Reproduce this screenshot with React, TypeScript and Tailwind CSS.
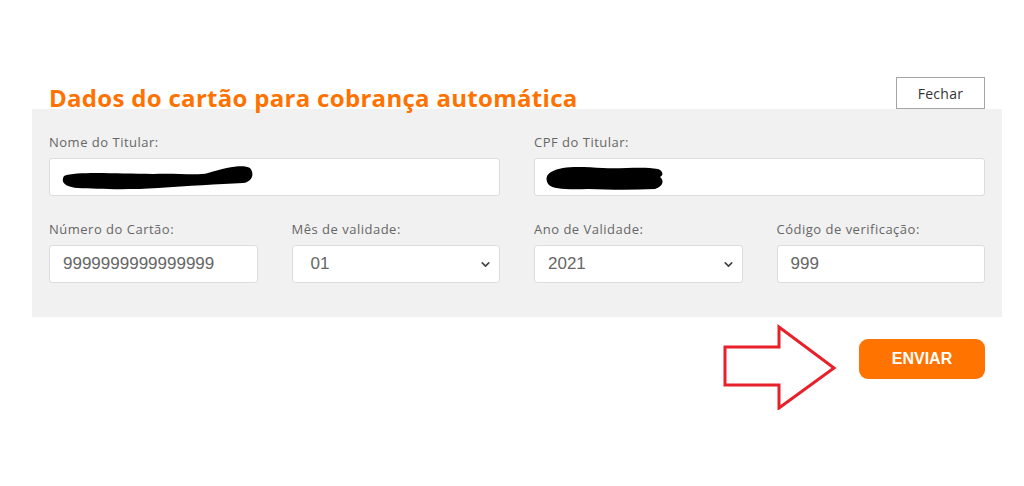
import { ChevronDown } from "lucide-react";

const Field = ({ label, children }: { label: string; children: React.ReactNode }) => (
  <div className="flex flex-col">
    <label className="text-[13px] leading-4 tracking-[0.5px] text-[#666] mb-[8px]">{label}</label>
    {children}
  </div>
);

const inputBox =
  "h-[38px] w-full bg-white border border-[#dcdcdc] rounded-[3px] flex items-center px-[13px] text-[17px] text-[#666]";

const Scribble = ({ w, d }: { w: number; d: string }) => (
  <svg width={w} height="30" viewBox={`0 0 ${w} 30`} className="-ml-[5px]">
    <path d={d} fill="#000" />
  </svg>
);

const arial = { fontFamily: '"Liberation Sans", Arial, sans-serif' };

export default function App() {
  return (
    <div className="w-[1024px] h-[486px] bg-white pt-[77px]" style={{ fontFamily: '"Open Sans", sans-serif' }}>
      <div className="ml-[32px] w-[970px]">
        {/* header */}
        <div className="flex justify-between items-end px-[17px]">
          <h1 className="text-[24px] leading-[24px] tracking-[0.3px] font-bold text-[#ff7200] -mb-[1px]">
            Dados do cartão para cobrança automática
          </h1>
          <button className="w-[89px] h-[32px] border border-[#a5a5a5] bg-white text-[14px] tracking-[0.3px] text-[#333]">
            Fechar
          </button>
        </div>

        {/* panel */}
        <div className="bg-[#f1f1f1] px-[17px] pt-[25px] pb-[34px]">
          <div className="grid grid-cols-2 gap-x-[34px]">
            <Field label="Nome do Titular:">
              <div className={inputBox}>
                <Scribble
                  w={196}
                  d="M6 14 C20 9 60 12 95 12 C120 11 140 14 150 11 C170 5 185 2 192 6 C197 12 194 20 185 21 C160 22 130 24 100 26 C70 28 40 27 20 26 C8 25 2 21 6 14 Z"
                />
              </div>
            </Field>
            <Field label="CPF do Titular:">
              <div className={inputBox}>
                <Scribble
                  w={124}
                  d="M8 10 C20 3 40 5 60 6 C80 7 100 4 115 7 C120 9 121 13 117 15 C121 18 121 24 112 27 C90 28 70 28 45 27 C25 28 10 27 6 23 C2 18 3 13 8 10 Z"
                />
              </div>
            </Field>
          </div>

          <div className="grid grid-cols-4 gap-x-[34px] mt-[25px]">
            <Field label="Número do Cartão:">
              <div className={inputBox} style={arial}>
                9999999999999999
              </div>
            </Field>
            <Field label="Mês de validade:">
              <div className={`${inputBox} justify-between text-[#333] pr-[7px]`} style={arial}>
                <span className="pl-[5px]">01</span>
                <ChevronDown size={13} strokeWidth={3} className="text-[#444]" />
              </div>
            </Field>
            <Field label="Ano de Validade:">
              <div className={`${inputBox} justify-between text-[#333] pr-[7px]`} style={arial}>
                <span>2021</span>
                <ChevronDown size={13} strokeWidth={3} className="text-[#444]" />
              </div>
            </Field>
            <Field label="Código de verificação:">
              <div className={inputBox} style={arial}>
                999
              </div>
            </Field>
          </div>
        </div>

        {/* actions */}
        <div className="flex justify-end items-start px-[17px] mt-[5px] gap-[22px]">
          <svg width="116" height="88" viewBox="0 0 116 88">
            <polygon
              points="4,25 58,25 58,5 113,46 58,86 58,63 4,63"
              fill="none"
              stroke="#e8202a"
              strokeWidth="3"
              strokeLinejoin="miter"
            />
          </svg>
          <button
            className="w-[126px] h-[40px] mt-[17px] rounded-[9px] bg-[#ff7300] text-white text-[16px] font-bold"
            style={arial}
          >
            ENVIAR
          </button>
        </div>
      </div>
    </div>
  );
}
